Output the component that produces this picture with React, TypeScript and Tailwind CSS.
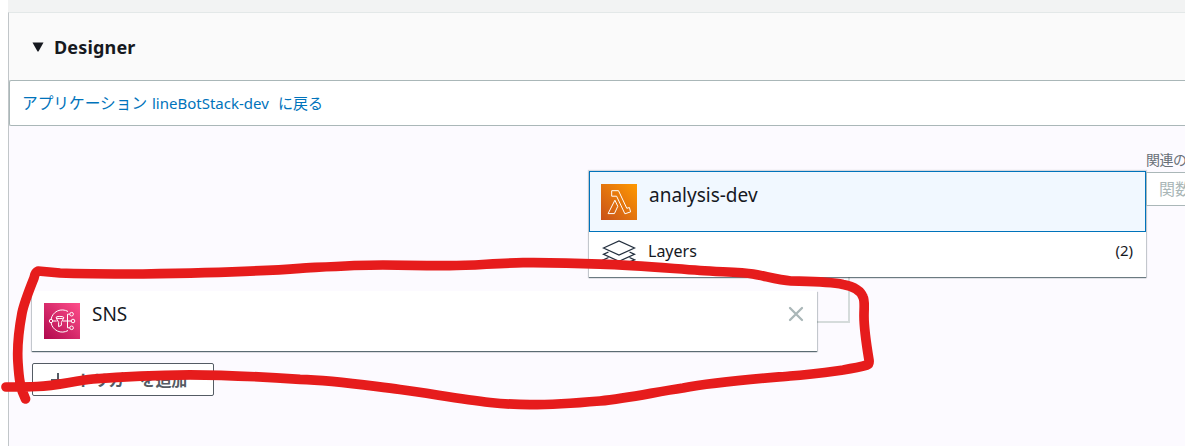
import React from "react";

function LambdaIcon() {
  return (
    <svg viewBox="0 0 36 36" className="size-9 shrink-0">
      <defs>
        <linearGradient id="lambda" x1="0" y1="1" x2="1" y2="0">
          <stop offset="0" stopColor="#c8511b" />
          <stop offset="1" stopColor="#f90" />
        </linearGradient>
      </defs>
      <rect width="36" height="36" fill="url(#lambda)" />
      <path
        d="M10.7 6.7h6.8l8.3 17.6 2.6-.8 1.2 4.4-5.7 1.9-8.3-17.6h-4.9zM13.9 16.2l2.9 6.1-3.4 7.3H7.1z"
        fill="none"
        stroke="#fff"
        strokeWidth="1"
        strokeLinejoin="round"
      />
    </svg>
  );
}

function SnsIcon() {
  return (
    <svg viewBox="0 0 36 36" className="size-9 shrink-0">
      <defs>
        <linearGradient id="sns" x1="0" y1="1" x2="1" y2="0">
          <stop offset="0" stopColor="#b0084d" />
          <stop offset="1" stopColor="#ff4f8b" />
        </linearGradient>
      </defs>
      <rect width="36" height="36" fill="url(#sns)" />
      <g fill="none" stroke="#fff" strokeWidth="1">
        <path d="M7.1 16.2A11.3 11.3 0 0 1 24 8.5M7.1 19.8A11.3 11.3 0 0 0 24 27.5" />
        <circle cx="7" cy="18" r="1.7" />
        <circle cx="27.6" cy="11.2" r="1.8" />
        <circle cx="29" cy="18" r="1.8" />
        <circle cx="27.6" cy="24.8" r="1.8" />
        <path d="M8.7 18h4M19 18h8.2M25.8 11.2h-2.3v13.6h2.3" />
        <path d="M12 14.6l2.6 4.8v4.2l2.8-1.3v-2.9l2.4-4.8" />
        <ellipse cx="15.9" cy="14.5" rx="3.9" ry="1.1" />
      </g>
    </svg>
  );
}

function LayersIcon() {
  return (
    <svg viewBox="0 0 34 27" className="h-[27px] w-[34px] shrink-0" fill="none" stroke="#232f3e" strokeWidth="1.3">
      <path d="M1.5 8L17 1l15.500 7L17 15z" />
      <path d="M6.500 12L1.500 14.300 17 21.300l15.500-7-5-2.300" />
      <path d="M6.500 17.500L1.500 19.800 17 26l15.500-6.200-5-2.300" />
    </svg>
  );
}

function Annotation() {
  return (
    <svg viewBox="0 0 1185 446" className="pointer-events-none absolute left-0 top-0 h-[446px] w-[1185px]">
      <path
        d="M6 387 C16 387 27 387 37 386.500 C57 386 73 381 93 379 C130 376 165 375 190 374.800 C225 375 265 377 300 379.300 C335 380 370 386 400 389.500 C430 393.500 460 399 490 402.500 C505 404 518 404.700 530 404.700 C555 404.700 577 403 600 401 C630 398 655 392 683 388 C715 382 755 379 790 376 C810 374.500 828 372 843 370 C852 368.500 860 367 867 365 Q869.500 364 869 360 C866 342 864 330 864 316 C864 307 865 301 863 297 C860 289 851 286 843 284.500 C829 281.500 809 281.500 791 281 C778 280 765 276 753 274 C741 272 722 272 700 270.500 C665 268 635 265 600 264.200 C573 263 548 262.500 523 262.700 C495 263 472 266 447 265.700 L427 265.700 L383 265 C353 265 325 267 300 268.300 C265 271 205 273 143 274 C110 274 83 274 60 273 L38 271 Q35 272 34 278 C28 293 24 303 22 313 C19 329 17 349 18 363 C19 378 20 388 25.500 399"
        fill="none"
        stroke="#e61c1c"
        strokeWidth="9.700"
        strokeLinecap="round"
        strokeLinejoin="round"
      />
    </svg>
  );
}

export default function App() {
  return (
    <div className="relative flex h-[446px] w-[1185px] flex-col overflow-hidden bg-white pl-2 font-['Noto_Sans','Noto_Sans_CJK_JP',sans-serif] text-[#16191f]">
      <div className="h-3 shrink-0 bg-[#f2f3f3]" />
      <section className="flex flex-1 flex-col border-l border-t border-l-[#c1c6c9] border-t-[#e3e8e8] bg-[#fcfaff]">
        <header className="flex h-[67px] shrink-0 items-center gap-[10px] bg-[#fafafa] pl-[23px]">
          <svg viewBox="0 0 12 10" className="h-[10px] w-3">
            <path d="M.5.500h11L6.500 9.500h-1z" fill="#16191f" />
          </svg>
          <h2 className="text-[18px] font-bold leading-6 tracking-[0.160px]">Designer</h2>
        </header>
        <div className="flex h-[46px] shrink-0 items-center rounded-l-[2px] border border-r-0 border-[#aab7b8] bg-white pl-3">
          <a className="flex items-center whitespace-pre text-[15px] leading-6 text-[#0073bb]">
            <span className="w-[130px] text-[15.700px]">アプリケーション</span>
            <span className="w-[126px]">lineBotStack-dev</span>
            <span>に戻る</span>
          </a>
        </div>
        <div className="relative flex-1">
          <div className="absolute left-[808px] top-[151px] h-[46px] w-[33px] border-b-2 border-r-2 border-[#d5dbdb]" />

          <div className="absolute left-[580px] top-[45px] flex h-[106px] w-[557px] flex-col bg-white shadow-[0_1px_1px_0_rgba(0,28,36,0.5),0_0_1px_1px_rgba(0,28,36,0.15)]">
            <div className="flex h-[61px] gap-3 border border-[#0073bb] bg-[#f1f8ff] px-[11px] pt-3">
              <LambdaIcon />
              <span className="text-[19px] leading-[23px]">analysis-dev</span>
            </div>
            <div className="flex gap-3 px-[13px] pt-2">
              <LayersIcon />
              <span className="flex-1 text-[16px] leading-[22px]">Layers</span>
              <span className="text-[15px] leading-[21px]">(2)</span>
            </div>
          </div>

          <div className="absolute left-[23px] top-[165px] flex h-[60px] w-[785px] gap-3 bg-white pl-3 pr-3 pt-3 shadow-[0_1px_1px_0_rgba(0,28,36,0.5),1px_1px_1px_0_rgba(0,28,36,0.15),-1px_1px_1px_0_rgba(0,28,36,0.15)]">
            <SnsIcon />
            <span className="flex-1 text-[19px] leading-[23px]">SNS</span>
            <svg viewBox="0 0 18 18" className="mt-[2px] size-[18px]" stroke="#aab7b8" strokeWidth="2.300" strokeLinecap="round">
              <path d="M3 3l12 12M15 3L3 15" />
            </svg>
          </div>

          <button className="absolute left-[23px] top-[237px] flex h-[33px] w-[182px] items-center rounded-[2px] border border-[#545b64] bg-white pl-[18px] text-[16px] font-bold leading-6 text-[#545b64]">
            <svg viewBox="0 0 14 14" className="mr-3 size-[14px]" stroke="#545b64" strokeWidth="2">
              <path d="M7 0v14M0 7h14" />
            </svg>
            <span className="whitespace-nowrap tracking-[-0.300px]">トリガーを追加</span>
          </button>

          <label className="absolute left-[1137px] top-[24px] whitespace-nowrap text-[14px] leading-5 tracking-[-0.500px] text-[#687078]">関連の関数:</label>
          <div className="absolute left-[1137px] top-[46px] flex h-[34px] w-[200px] items-center border border-[#aab7b8] bg-white pl-3 text-[16px] text-[#aab7b8]">関数を選択</div>
        </div>
      </section>
      <Annotation />
    </div>
  );
}
